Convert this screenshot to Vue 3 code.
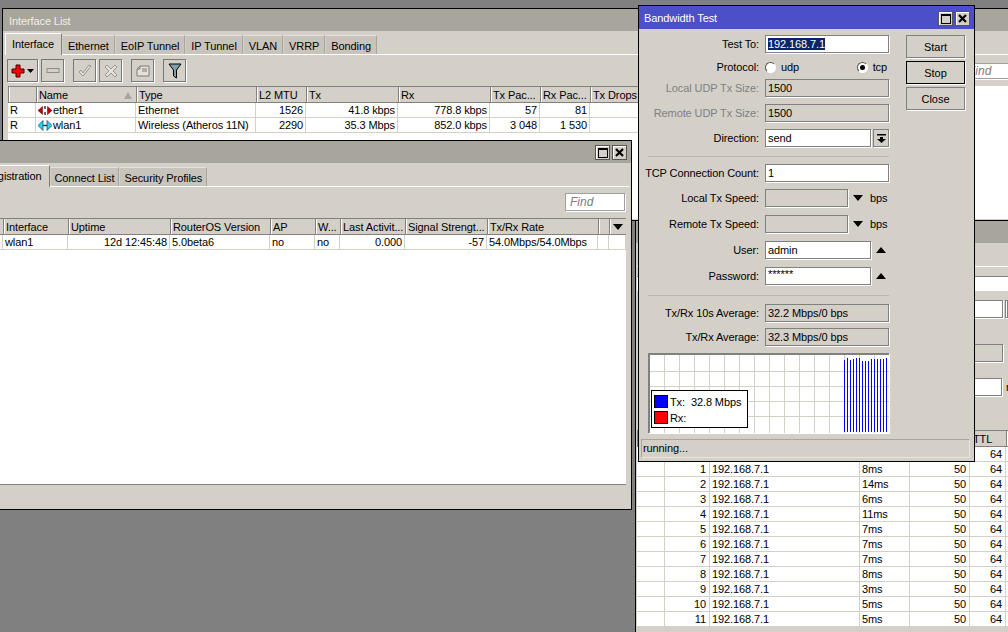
<template>
  <div class="desktop">
    <!-- Interface List -->
    <section class="window iface-win">
      <header class="title">Interface List</header>
      <nav class="tabs">
        <span v-for="(t, i) in ifaceTabs" :key="t" class="tab" :class="{ active: i === 0 }">{{ t }}</span>
      </nav>
      <div class="toolbar">
        <button class="tool add">
          <svg width="24" height="16" viewBox="0 0 24 16">
            <path d="M5 2h4v4h4v4H9v4H5v-4H1V6h4z" fill="#f00" stroke="#400" stroke-width="1" />
            <path d="M16 6h7l-3.500 4z" fill="#000" />
          </svg>
        </button>
        <button class="tool">
          <svg width="14" height="8" viewBox="0 0 14 8"><rect x="1" y="1.500" width="12" height="4" fill="#d4d0c8" stroke="#908c84" /></svg>
        </button>
        <button class="tool gap">
          <svg width="16" height="14" viewBox="0 0 16 14"><path d="M2 8l4 4 8-10-2-1-6 8-2-3z" fill="#e4e1da" stroke="#98958c" /></svg>
        </button>
        <button class="tool">
          <svg width="14" height="14" viewBox="0 0 14 14"><path d="M1 3l2-2 4 4 4-4 2 2-4 4 4 4-2 2-4-4-4 4-2-2 4-4z" fill="#e4e1da" stroke="#98958c" /></svg>
        </button>
        <button class="tool gap">
          <svg width="14" height="12" viewBox="0 0 14 12"><path d="M1 11V4l3-3h9v10zM4 1v3H1" fill="#e4e1da" stroke="#807c74" /><path d="M6 4h5M6 6h5" stroke="#807c74" /></svg>
        </button>
        <button class="tool gap">
          <svg width="14" height="16" viewBox="0 0 14 16"><path d="M1 1h12L8.500 7v8l-3-2V7z" fill="#7fa0a8" stroke="#000" /></svg>
        </button>
        <input class="find iface-find" placeholder="Find" />
      </div>
      <div class="grid-wrap">
        <div class="thead" :style="colsOf(ifaceCols)">
          <span v-for="h in ifaceHead" :key="h">{{ h }}<i v-if="h === 'Name'" class="sort"></i></span>
        </div>
        <div v-for="r in ifaceRows" :key="r.name" class="trow" :style="colsOf(ifaceCols)">
          <span>R</span>
          <span class="name">
            <svg v-if="r.kind === 'eth'" width="14" height="11" viewBox="0 0 14 11">
              <path d="M0 5.500l4.500-4v8zM14 5.500l-4.500-4v8z" fill="#c00000" stroke="#500" stroke-width=".5" />
              <path d="M7 1v3M7 7v3" stroke="#333" stroke-width="1.500" />
            </svg>
            <svg v-else width="14" height="11" viewBox="0 0 14 11">
              <path d="M0 5.500l5-5v10zM14 5.500l-5-5v10z" fill="#2fd0e8" stroke="#046" stroke-width=".7" />
              <path d="M5 5.500h4" stroke="#046" stroke-width="1.500" />
            </svg>
            {{ r.name }}
          </span>
          <span>{{ r.type }}</span>
          <span class="num">{{ r.mtu }}</span>
          <span class="num">{{ r.tx }}</span>
          <span class="num">{{ r.rx }}</span>
          <span class="num">{{ r.txp }}</span>
          <span class="num">{{ r.rxp }}</span>
          <span class="num">0</span>
        </div>
      </div>
    </section>

    <!-- window behind the bandwidth test -->
    <section class="window ping-win">
      <header class="title"></header>
      <div class="ping-line"></div>
      <div class="ping-wide"></div>
      <div class="ping-row first">
        <div class="box"></div>
        <div class="box stub"></div>
      </div>
      <div class="ping-row dis">
        <div class="box off"></div>
      </div>
      <div class="ping-row last">
        <div class="box narrow"></div>
        <span class="unit">ms</span>
      </div>
      <div class="grid-wrap">
        <div class="thead" :style="colsOf(pingCols)">
          <span></span><span></span><span></span><span></span><span></span><span>TTL</span><span></span>
        </div>
        <div v-for="p in pings" :key="p.seq" class="trow" :style="colsOf(pingCols)">
          <span></span>
          <span class="num">{{ p.seq || "" }}</span>
          <span>{{ p.seq ? "192.168.7.1" : "" }}</span>
          <span>{{ p.time }}</span>
          <span class="num">{{ p.seq ? 50 : "" }}</span>
          <span class="num">64</span>
          <span></span>
        </div>
      </div>
    </section>

    <!-- wireless registration table -->
    <section class="window wifi-win">
      <header class="title">
        <span class="win-btns">
          <span class="win-btn"><i class="max"></i></span>
          <span class="win-btn">
            <svg width="11" height="11" viewBox="0 0 11 11"><path d="M2 2l7 7M9 2l-7 7" stroke="#000" stroke-width="2.200" /></svg>
          </span>
        </span>
      </header>
      <nav class="tabs">
        <span v-for="(t, i) in wifiTabs" :key="t" class="tab" :class="{ active: i === 0 }">{{ t }}</span>
      </nav>
      <div class="wifi-bar">
        <input class="find" placeholder="Find" />
      </div>
      <div class="grid-wrap wifi-grid">
        <div class="thead" :style="colsOf(wifiCols)">
          <span></span>
          <span v-for="h in wifiHead" :key="h">{{ h }}</span>
          <span></span>
          <span class="menu"><i class="tri down"></i></span>
        </div>
        <div class="trow" :style="colsOf(wifiCols)">
          <span></span>
          <span>wlan1</span>
          <span class="num">12d 12:45:48</span>
          <span>5.0beta6</span>
          <span>no</span>
          <span>no</span>
          <span class="num">0.000</span>
          <span class="num">-57</span>
          <span>54.0Mbps/54.0Mbps</span>
          <span></span>
          <span></span>
        </div>
      </div>
    </section>

    <!-- Bandwidth Test -->
    <section class="window bw-win">
      <header class="title blue">
        Bandwidth Test
        <span class="win-btns">
          <span class="win-btn"><i class="max"></i></span>
          <span class="win-btn">
            <svg width="11" height="11" viewBox="0 0 11 11"><path d="M2 2l7 7M9 2l-7 7" stroke="#000" stroke-width="2.200" /></svg>
          </span>
        </span>
      </header>
      <div class="bw-body">
        <div class="form">
          <div class="row first">
            <label>Test To:</label>
            <div class="field"><mark>192.168.7.1</mark></div>
          </div>
          <div class="row tight">
            <label>Protocol:</label>
            <div class="radios">
              <span class="radio-item"><i class="radio"></i>udp</span>
              <span class="radio-item"><i class="radio on"></i>tcp</span>
            </div>
          </div>
          <div class="row tighter">
            <label class="dim">Local UDP Tx Size:</label>
            <div class="field off">1500</div>
          </div>
          <div class="row">
            <label class="dim">Remote UDP Tx Size:</label>
            <div class="field off">1500</div>
          </div>
          <div class="row">
            <label>Direction:</label>
            <div class="field mid">send</div>
            <span class="drop">
              <svg width="9" height="9" viewBox="0 0 9 9"><path d="M0 0h9v1.500H0zM3 3h3v2h3L4.500 9 0 5h3z" fill="#000" /></svg>
            </span>
          </div>
          <hr />
          <div class="row">
            <label>TCP Connection Count:</label>
            <div class="field">1</div>
          </div>
          <div class="row">
            <label>Local Tx Speed:</label>
            <div class="field off short"></div>
            <i class="tri down side"></i>
            <span class="bps">bps</span>
          </div>
          <div class="row wide">
            <label>Remote Tx Speed:</label>
            <div class="field off short"></div>
            <i class="tri down side"></i>
            <span class="bps">bps</span>
          </div>
          <div class="row wide">
            <label>User:</label>
            <div class="field mid">admin</div>
            <i class="tri up side"></i>
          </div>
          <div class="row wide">
            <label>Password:</label>
            <div class="field mid pw">******</div>
            <i class="tri up side"></i>
          </div>
          <hr class="low" />
          <div class="row">
            <label>Tx/Rx 10s Average:</label>
            <div class="field off">32.2 Mbps/0 bps</div>
          </div>
          <div class="row tall">
            <label>Tx/Rx Average:</label>
            <div class="field off">32.3 Mbps/0 bps</div>
          </div>
          <div class="graph">
            <svg width="239" height="78" viewBox="0 0 239 78">
              <path v-for="x in gridX" :key="'x' + x" :d="`M${x + 0.5} 0V78`" stroke="#d4d0c8" />
              <path v-for="y in gridY" :key="'y' + y" :d="`M0 ${y + 0.5}H239`" stroke="#d4d0c8" />
              <rect v-for="(h, i) in bars" :key="i" :x="194 + i * 3" :y="77 - h" width="1" :height="h" fill="#0000ff" />
            </svg>
            <div class="legend">
              <div><i class="swatch tx"></i>Tx:&nbsp; 32.8 Mbps</div>
              <div><i class="swatch rx"></i>Rx:</div>
            </div>
          </div>
        </div>
        <div class="actions">
          <button class="btn">Start</button>
          <button class="btn focus">Stop</button>
          <button class="btn">Close</button>
        </div>
      </div>
      <footer class="status">running...</footer>
    </section>
  </div>
</template>

<script setup>
const ifaceTabs = ["Interface", "Ethernet", "EoIP Tunnel", "IP Tunnel", "VLAN", "VRRP", "Bonding"];
const ifaceHead = ["", "Name", "Type", "L2 MTU", "Tx", "Rx", "Tx Pac...", "Rx Pac...", "Tx Drops"];
const ifaceCols = [28, 100, 120, 50, 92, 92, 50, 50, 60];
const ifaceRows = [
  { kind: "eth", name: "ether1", type: "Ethernet", mtu: "1526", tx: "41.8 kbps", rx: "778.8 kbps", txp: "57", rxp: "81" },
  { kind: "wlan", name: "wlan1", type: "Wireless (Atheros 11N)", mtu: "2290", tx: "35.3 Mbps", rx: "852.0 kbps", txp: "3 048", rxp: "1 530" },
];

const wifiTabs = ["Registration", "Connect List", "Security Profiles"];
const wifiHead = ["Interface", "Uptime", "RouterOS Version", "AP", "W...", "Last Activit...", "Signal Strengt...", "Tx/Rx Rate"];
const wifiCols = [25, 65, 102, 100, 45, 25, 65, 82, 111, 11, 17];

const pingCols = [28, 45, 150, 50, 60, 36, 40];
const times = ["", "8ms", "14ms", "6ms", "11ms", "7ms", "7ms", "7ms", "8ms", "3ms", "5ms", "5ms"];
const pings = times.map((time, i) => ({ seq: i, time }));

const gridX = Array.from({ length: 16 }, (_, i) => 14 + i * 15);
const gridY = [16, 31, 46, 61];
const bars = [72, 74, 72, 73, 74, 74, 71, 71, 71, 73, 73, 73, 73, 73, 74];

const colsOf = (cols) => ({ gridTemplateColumns: cols.map((c) => c + "px").join(" ") });
</script>

<style>
html,
body {
  margin: 0;
  overflow: hidden;
}
</style>

<style scoped>
.desktop {
  position: relative;
  width: 1008px;
  height: 632px;
  overflow: hidden;
  background: #808080;
  font: 11px/14px "Liberation Sans", Arial, sans-serif;
  letter-spacing: -0.1px;
  color: #000;
}
.window {
  position: absolute;
  box-sizing: border-box;
  border: 1px solid #000;
  background: #d4d0c8;
  padding: 0 2px;
}
.iface-win {
  left: 2px;
  top: 8px;
  width: 1040px;
  height: 213px;
}
.wifi-win {
  left: -28px;
  top: 140px;
  width: 660px;
  height: 370px;
}
.ping-win {
  left: 635px;
  top: 220px;
  width: 420px;
  height: 430px;
  padding: 0 1px;
}
.bw-win {
  left: 638px;
  top: 5px;
  width: 337px;
  height: 457px;
  padding: 0 2px 3px;
}

.title {
  position: relative;
  height: 22px;
  margin: 0 -2px;
  padding-left: 6px;
  background: #a8a59c;
  color: #f0efea;
  line-height: 24px;
}
.ping-win .title {
  margin: 0 -1px;
}
.title.blue {
  height: 23px;
  padding-left: 5px;
  background: #4c50c8;
  color: #fff;
  line-height: 25px;
}
.win-btns {
  position: absolute;
  right: 4px;
  top: 5px;
  display: flex;
  gap: 2px;
}
.wifi-win .win-btns {
  top: 4px;
}
.win-btn {
  display: flex;
  width: 15px;
  height: 15px;
  align-items: center;
  justify-content: center;
  box-sizing: border-box;
  border: 1px solid #555;
  background: #d4d0c8;
  box-shadow: inset 1px 1px 0 #fff;
}
.max {
  display: block;
  width: 10px;
  height: 10px;
  border: 1px solid #000;
  border-top-width: 2px;
  box-sizing: border-box;
}
.tabs {
  display: flex;
  height: 23px;
  align-items: flex-end;
  border-bottom: 1px solid #fff;
  box-sizing: border-box;
  margin-top: 1px;
}
.tab {
  height: 19px;
  padding: 0 5px;
  margin-right: 1px;
  line-height: 20px;
  background: #c8c4bc;
  border-top: 1px solid #e4e1da;
  border-right: 1px solid #a8a59c;
  box-sizing: border-box;
}
.tab.active {
  height: 22px;
  padding: 0 7px 0 6px;
  margin-bottom: -1px;
  line-height: 21px;
  background: #d4d0c8;
  border-top: 1px solid #fff;
  border-left: 1px solid #fff;
  border-right: 1px solid #808080;
}
.wifi-win .tabs {
  padding-left: 2px;
}
.wifi-win .tab:not(.active) {
  padding: 0 4px;
}
.toolbar {
  display: flex;
  height: 31px;
  align-items: center;
  gap: 3px;
  padding-left: 2px;
}
.tool {
  display: flex;
  width: 23px;
  height: 23px;
  padding: 0;
  align-items: center;
  justify-content: center;
  box-sizing: border-box;
  background: #d4d0c8;
  border: 1px solid #777;
  box-shadow: 1px 1px 0 #fff;
}
.tool.add {
  width: 31px;
}
.tool.gap {
  margin-left: 6px;
}
.find {
  width: 58px;
  height: 16px;
  padding: 0 4px;
  box-sizing: border-box;
  border: 1px solid #a0a0a0;
  background: #fff;
  box-shadow: 1px 1px 0 #fff;
  font: italic 12px "Liberation Sans", Arial, sans-serif;
  outline: none;
}
.find::placeholder {
  color: #808080;
  opacity: 1;
}
.iface-find {
  margin-left: auto;
  width: 76px;
}
.grid-wrap {
  background: #fff;
  margin: 0 0 0 3px;
}
.iface-win .grid-wrap {
  height: 133px;
}
.thead,
.trow {
  display: grid;
  width: max-content;
}
.thead {
  height: 17px;
  background: #d4d0c8;
  border-top: 1px solid #808080;
  border-bottom: 1px solid #808080;
  box-sizing: border-box;
}
.thead span {
  padding-left: 2px;
  line-height: 16px;
  white-space: nowrap;
  overflow: hidden;
  border-left: 1px solid #808080;
  box-shadow: inset 1px 0 0 #fff;
}
.sort {
  float: right;
  width: 0;
  height: 0;
  margin: 5px 4px 0 0;
  border-left: 4px solid transparent;
  border-right: 4px solid transparent;
  border-bottom: 7px solid #a8a59c;
}
.trow {
  height: 15px;
  border-bottom: 1px solid #d4d0c8;
  box-sizing: border-box;
  background: #fff;
}
.trow span {
  padding: 0 2px;
  line-height: 14px;
  white-space: nowrap;
  overflow: hidden;
  border-right: 1px solid #d4d0c8;
}
.trow .num {
  text-align: right;
}
.name {
  display: flex;
  align-items: center;
  gap: 1px;
}
.wifi-bar {
  display: flex;
  height: 31px;
  padding: 0 4px 2px 0;
  box-sizing: border-box;
  align-items: center;
  justify-content: flex-end;
}
.wifi-bar .find {
  width: 60px;
  height: 18px;
}
.wifi-grid {
  width: 648px;
  height: 266px;
  overflow: hidden;
  border-bottom: 1px solid #808080;
}
.menu {
  display: flex;
  align-items: center;
  justify-content: center;
  padding: 0 !important;
}
.tri {
  display: block;
  width: 0;
  height: 0;
  border-left: 5px solid transparent;
  border-right: 5px solid transparent;
}
.tri.down {
  border-top: 6px solid #000;
}
.tri.up {
  border-bottom: 6px solid #000;
}
.tri.side {
  align-self: center;
  margin-left: 5px;
}

.ping-line {
  height: 1px;
  margin-top: 23px;
  background: #fff;
}
.ping-wide {
  height: 14px;
  margin-top: 9px;
  background: #fff;
  border-top: 1px solid #808080;
}
.ping-row {
  display: flex;
  align-items: flex-start;
  justify-content: flex-end;
  gap: 2px;
  padding-right: 50px;
}
.ping-row.first {
  margin-top: 9px;
  padding-right: 48px;
}
.ping-row.dis {
  margin-top: 26px;
}
.ping-row.last {
  margin-top: 16px;
  padding-right: 35px;
}
.box {
  box-sizing: border-box;
  width: 300px;
  height: 18px;
  background: #fff;
  border: 1px solid #808080;
  box-shadow: 1px 1px 0 #fff;
}
.box.stub {
  width: 3px;
  margin-right: -3px;
}
.box.off {
  background: #d4d0c8;
}
.box.narrow {
  width: 299px;
}
.unit {
  width: 12px;
  margin-left: 2px;
  line-height: 18px;
}
.ping-win .grid-wrap {
  height: 190px;
  margin: 34px 0 0 0;
}
.ping-win .trow span {
  padding: 0 3px 0 2px;
}

.bw-body {
  display: flex;
}
.form {
  width: 251px;
  padding-left: 6px;
}
.row {
  display: flex;
  height: 18px;
  margin-top: 7px;
  line-height: 18px;
}
.row.first {
  margin-top: 6px;
}
.row.tight {
  margin-top: 5px;
}
.row.tighter {
  margin-top: 3px;
}
.row.wide {
  margin-top: 8px;
}
.row.tall {
  margin-top: 6px;
}
.row label {
  display: flex;
  flex: 0 0 112px;
  min-width: 0;
  justify-content: flex-end;
  margin-right: 6px;
  white-space: nowrap;
}
.dim {
  color: #808080;
}
.field {
  box-sizing: border-box;
  flex: 0 0 124px;
  height: 18px;
  padding-left: 2px;
  border: 1px solid #808080;
  background: #fff;
  box-shadow: 1px 1px 0 #fff;
  line-height: 16px;
}
.field.off {
  background: #d4d0c8;
}
.field.mid {
  flex-basis: 106px;
}
.field.short {
  flex-basis: 83px;
}
.field.pw {
  line-height: 12px;
}
.field mark {
  background: #0a246a;
  color: #fff;
}
.drop {
  display: flex;
  width: 16px;
  height: 18px;
  margin-left: 2px;
  align-items: center;
  justify-content: center;
  box-sizing: border-box;
  border: 1px solid #808080;
  box-shadow: 1px 1px 0 #fff;
}
.bps {
  margin-left: 7px;
}
.radios {
  display: flex;
  flex: 0 0 124px;
  justify-content: space-between;
  padding-right: 2px;
  box-sizing: border-box;
}
.radio-item {
  display: flex;
  align-items: center;
  gap: 5px;
}
.radio {
  position: relative;
  display: block;
  width: 11px;
  height: 11px;
  box-sizing: border-box;
  border-radius: 50%;
  background: #fff;
  border: 1px solid;
  border-color: #555 #fff #fff #555;
}
.radio.on::after {
  content: "";
  position: absolute;
  left: 2px;
  top: 2px;
  width: 5px;
  height: 5px;
  border-radius: 50%;
  background: #000;
}
hr {
  height: 1px;
  width: 241px;
  margin: 9px 0 0 1px;
  border: 0;
  background: #bab6ae;
}
hr.low {
  margin-top: 10px;
}
hr.low + .row {
  margin-top: 8px;
}
.graph {
  position: relative;
  box-sizing: border-box;
  width: 241px;
  height: 80px;
  margin: 7px 0 0 1px;
  background: #fff;
  border-top: 2px solid #808080;
  border-left: 2px solid #808080;
  box-shadow: 1px 1px 0 #fff;
}
.graph svg {
  display: block;
}
.legend {
  position: absolute;
  left: 1px;
  top: 35px;
  box-sizing: border-box;
  width: 97px;
  height: 38px;
  padding: 4px 2px 0;
  border: 1px solid #000;
  background: #fff;
}
.legend div {
  display: flex;
  height: 13px;
  margin-bottom: 3px;
  align-items: center;
  white-space: pre;
}
.swatch {
  display: block;
  width: 14px;
  height: 13px;
  margin-right: 2px;
  box-sizing: border-box;
  border: 1px solid #000;
}
.swatch.tx {
  background: #0000ff;
}
.swatch.rx {
  background: #ff0000;
}
.actions {
  display: flex;
  flex-direction: column;
  gap: 3px;
  padding: 6px 0 0 8px;
}
.btn {
  width: 59px;
  height: 23px;
  padding: 0;
  background: #d4d0c8;
  border: 1px solid #808080;
  box-shadow: 1px 1px 0 #fff;
  font: 11px "Liberation Sans", Arial, sans-serif;
  color: #000;
}
.btn.focus {
  border-color: #000;
}
.status {
  box-sizing: border-box;
  height: 19px;
  margin: 6px 2px 0 0;
  padding-left: 1px;
  border: 1px solid #a8a59c;
  border-right-color: #e8e6e0;
  border-bottom-color: #e8e6e0;
  line-height: 17px;
}
</style>
